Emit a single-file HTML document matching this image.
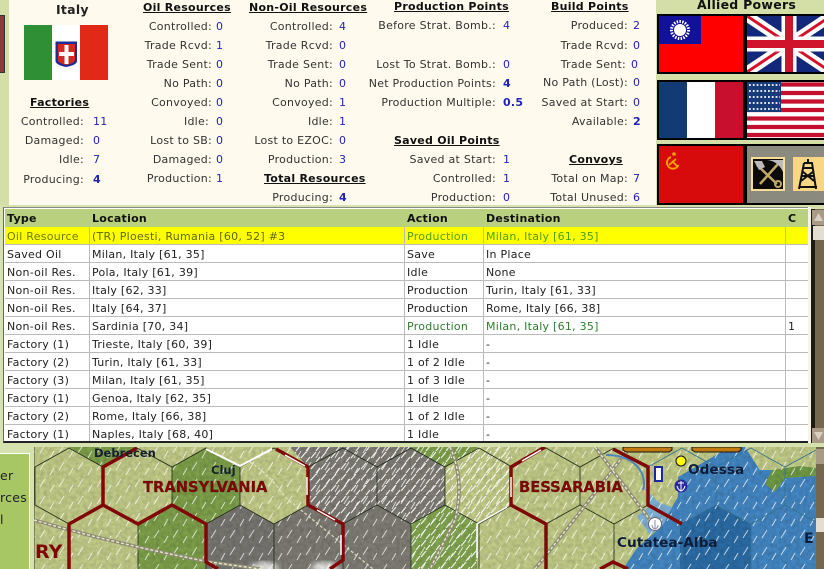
<!DOCTYPE html>
<html><head><meta charset="utf-8">
<style>
html,body{margin:0;padding:0;width:824px;height:569px;overflow:hidden;background:#d6e2ad}
body{position:relative;font-family:"DejaVu Sans","Liberation Sans",sans-serif;font-size:11px;color:#222;letter-spacing:.26px}
.a{position:absolute}
.l{position:absolute;white-space:nowrap;line-height:16px;color:#333}
.r{text-align:right;width:200px}
.v{position:absolute;white-space:nowrap;line-height:16px;color:#2222bb}
.b{font-weight:bold}
.h{position:absolute;white-space:nowrap;line-height:16px;font-weight:bold;color:#111;text-decoration:underline;font-size:11px}
.c{position:absolute;line-height:20px;white-space:nowrap;color:#222}
.g{color:#2e7d2e}
.f{position:absolute;border:2px solid #000;overflow:hidden;box-sizing:border-box}
</style></head><body>

<div class="a" style="left:0;top:0;width:9px;height:205px;background:#d3dfa7"></div>
<div class="a" style="left:0;top:15px;width:5px;height:58px;background:#8c3a34;border:1px solid #333;border-left:0;box-sizing:border-box"></div>
<div class="a" style="left:9px;top:0;width:647px;height:205px;background:#fefbee"></div>
<div class="a" style="left:656px;top:0;width:168px;height:208px;background:#d3dfa7"></div>

<div class="l b" style="left:56px;top:2px;color:#222;font-size:12.5px">Italy</div>
<svg class="a" style="left:24px;top:25px" width="84" height="55" viewBox="0 0 84 55"><rect width="28" height="55" fill="#2f8f35"/><rect x="28" width="28" height="55" fill="#fff"/><rect x="56" width="28" height="55" fill="#e02a17"/><path d="M31.500 16.500H53V36Q53 40 42 42Q32 40 31.500 36Z" fill="#1c2c9c"/><path d="M34 19H51V35Q51 38 42.500 40Q34 38 34 35Z" fill="#d22a20"/><path d="M40.500 20H44.500V27H50V31H44.500V39H40.500V31H35V27H40.500Z" fill="#fff"/></svg>

<div class="h" style="left:30px;top:95px">Factories</div>
<div class="l r" style="left:-116px;top:114px">Controlled:</div><div class="v" style="left:93px;top:114px">11</div>
<div class="l r" style="left:-116px;top:133px">Damaged:</div><div class="v" style="left:93px;top:133px">0</div>
<div class="l r" style="left:-116px;top:152px">Idle:</div><div class="v" style="left:93px;top:152px">7</div>
<div class="l r" style="left:-116px;top:172px">Producing:</div><div class="v b" style="left:93px;top:172px">4</div>

<div class="h" style="left:143px;top:0">Oil Resources</div>
<div class="l r" style="left:12px;top:19px">Controlled:</div><div class="v" style="left:216px;top:19px">0</div>
<div class="l r" style="left:12px;top:38px">Trade Rcvd:</div><div class="v" style="left:216px;top:38px">1</div>
<div class="l r" style="left:12px;top:57px">Trade Sent:</div><div class="v" style="left:216px;top:57px">0</div>
<div class="l r" style="left:12px;top:76px">No Path:</div><div class="v" style="left:216px;top:76px">0</div>
<div class="l r" style="left:12px;top:95px">Convoyed:</div><div class="v" style="left:216px;top:95px">0</div>
<div class="l r" style="left:9px;top:114px">Idle:</div><div class="v" style="left:216px;top:114px">0</div>
<div class="l r" style="left:12px;top:133px">Lost to SB:</div><div class="v" style="left:216px;top:133px">0</div>
<div class="l r" style="left:12px;top:152px">Damaged:</div><div class="v" style="left:216px;top:152px">0</div>
<div class="l r" style="left:12px;top:171px">Production:</div><div class="v" style="left:216px;top:171px">1</div>

<div class="h" style="left:249px;top:0">Non-Oil Resources</div>
<div class="l r" style="left:133px;top:19px">Controlled:</div><div class="v" style="left:339px;top:19px">4</div>
<div class="l r" style="left:133px;top:38px">Trade Rcvd:</div><div class="v" style="left:339px;top:38px">0</div>
<div class="l r" style="left:133px;top:57px">Trade Sent:</div><div class="v" style="left:339px;top:57px">0</div>
<div class="l r" style="left:133px;top:76px">No Path:</div><div class="v" style="left:339px;top:76px">0</div>
<div class="l r" style="left:133px;top:95px">Convoyed:</div><div class="v" style="left:339px;top:95px">1</div>
<div class="l r" style="left:133px;top:114px">Idle:</div><div class="v" style="left:339px;top:114px">1</div>
<div class="l r" style="left:133px;top:133px">Lost to EZOC:</div><div class="v" style="left:339px;top:133px">0</div>
<div class="l r" style="left:133px;top:152px">Production:</div><div class="v" style="left:339px;top:152px">3</div>
<div class="h" style="left:264px;top:171px">Total Resources</div>
<div class="l r" style="left:133px;top:190px">Producing:</div><div class="v b" style="left:339px;top:190px">4</div>

<div class="h" style="left:394px;top:-1px">Production Points</div>
<div class="l r" style="left:296px;top:18px">Before Strat. Bomb.:</div><div class="v" style="left:503px;top:18px">4</div>
<div class="l r" style="left:296px;top:57px">Lost To Strat. Bomb.:</div><div class="v" style="left:503px;top:57px">0</div>
<div class="l r" style="left:296px;top:76px">Net Production Points:</div><div class="v b" style="left:503px;top:76px">4</div>
<div class="l r" style="left:296px;top:95px">Production Multiple:</div><div class="v b" style="left:503px;top:95px">0.5</div>
<div class="h" style="left:394px;top:133px">Saved Oil Points</div>
<div class="l r" style="left:296px;top:152px">Saved at Start:</div><div class="v" style="left:503px;top:152px">1</div>
<div class="l r" style="left:296px;top:171px">Controlled:</div><div class="v" style="left:503px;top:171px">1</div>
<div class="l r" style="left:296px;top:190px">Production:</div><div class="v" style="left:503px;top:190px">0</div>

<div class="h" style="left:551px;top:-1px">Build Points</div>
<div class="l r" style="left:428px;top:18px">Produced:</div><div class="v" style="left:633px;top:18px">2</div>
<div class="l r" style="left:428px;top:38px">Trade Rcvd:</div><div class="v" style="left:633px;top:38px">0</div>
<div class="l r" style="left:426px;top:57px">Trade Sent:</div><div class="v" style="left:631px;top:57px">0</div>
<div class="l r" style="left:428px;top:75px">No Path (Lost):</div><div class="v" style="left:633px;top:75px">0</div>
<div class="l r" style="left:428px;top:95px">Saved at Start:</div><div class="v" style="left:633px;top:95px">0</div>
<div class="l r" style="left:428px;top:114px">Available:</div><div class="v b" style="left:633px;top:114px">2</div>
<div class="h" style="left:569px;top:152px">Convoys</div>
<div class="l r" style="left:428px;top:171px">Total on Map:</div><div class="v" style="left:633px;top:171px">7</div>
<div class="l r" style="left:428px;top:190px">Total Unused:</div><div class="v" style="left:633px;top:190px">6</div>

<div class="l b" style="left:697px;top:-3px;color:#111;font-size:12.5px">Allied Powers</div>
<svg class="f" style="left:657px;top:14px;width:88px;height:60px" viewBox="0 0 84 56"><rect width="84" height="56" fill="#f00"/><rect width="42" height="28" fill="#11119a"/><circle cx="21" cy="14" r="8.500" fill="none" stroke="#fff" stroke-width="3" stroke-dasharray="1.500 1.300"/><circle cx="21" cy="14" r="6" fill="#fff"/></svg>
<svg class="f" style="left:745px;top:14px;width:88px;height:60px" viewBox="0 0 84 56"><rect width="84" height="56" fill="#12287a"/><path d="M0 0L84 56M84 0L0 56" stroke="#fff" stroke-width="11"/><path d="M0 0L84 56M84 0L0 56" stroke="#d0142c" stroke-width="3"/><path d="M42 0V56M0 28H84" stroke="#fff" stroke-width="15"/><path d="M42 0V56M0 28H84" stroke="#d0142c" stroke-width="8"/></svg>
<svg class="f" style="left:657px;top:80px;width:88px;height:60px" viewBox="0 0 84 56"><rect width="28" height="56" fill="#123a73"/><rect x="28" width="28" height="56" fill="#fff"/><rect x="56" width="28" height="56" fill="#c8102e"/></svg>
<svg class="f" style="left:745px;top:80px;width:88px;height:60px" viewBox="0 0 84 56"><rect width="84" height="56" fill="#fff"/><path d="M0 2.500H84M0 11H84M0 19.500H84M0 28H84M0 36.500H84M0 45H84M0 53H84" stroke="#c4102e" stroke-width="4.300"/><rect width="34" height="30" fill="#163a7a"/><path d="M2 3H33M2 9H33M2 15H33M2 21H33M2 27H33" stroke="#fff" stroke-width="1.800" stroke-dasharray="1.800 2"/></svg>
<svg class="f" style="left:657px;top:144px;width:88px;height:61px" viewBox="0 0 84 57"><rect width="84" height="57" fill="#d70b0b"/><path d="M12 11A6 6 0 1 0 19.500 19M10 19L17 13M13 15L19 21" fill="none" stroke="#fca400" stroke-width="1.800"/><circle cx="15" cy="8" r="1.800" fill="#fca400"/></svg>
<div class="f" style="left:745px;top:144px;width:88px;height:61px;background:#8a8a7f"></div>
<svg class="a" style="left:751px;top:157px" width="73" height="34" viewBox="0 0 73 34"><rect width="34" height="34" fill="#f7dc97"/><rect x="2" y="2" width="30" height="30" fill="#0c0a08"/><path d="M6 8L26 27M27 7L9 27" stroke="#c0a868" stroke-width="2.500"/><circle cx="27" cy="27" r="3" fill="none" stroke="#c0a868" stroke-width="2"/><path d="M3 4H11L14 10L8 13Z" fill="#bbb"/><path d="M16 3Q27 4 32 15V3Z" fill="#bbb"/><rect x="42" width="31" height="34" fill="#f9d684"/><path d="M57 2V6M53 6H61L65 32M53 6L48 32M48 30H66M50 19H63M52 11H62M51 14L63 24M63 14L50 24" fill="none" stroke="#111" stroke-width="2"/></svg>

<!-- table -->
<div class="a" style="left:3px;top:207px;width:805px;height:236px;background:#fff;border-left:1px solid #666;border-top:1px solid #888;border-bottom:2px solid #222;box-sizing:border-box"></div>
<div class="a" style="left:808px;top:207px;width:3px;height:236px;background:#f6f4e4"></div>
<div class="a" style="left:5px;top:209px;width:803px;height:18px;background:#b9d17f"></div>
<div class="a" style="left:5px;top:227px;width:803px;height:18px;background:#ff0"></div>
<div class="c b" style="left:7px;top:209px;color:#111">Type</div><div class="c b" style="left:92px;top:209px;color:#111">Location</div><div class="c b" style="left:407px;top:209px;color:#111">Action</div><div class="c b" style="left:486px;top:209px;color:#111">Destination</div><div class="c b" style="left:788px;top:209px;color:#111">C</div>

<div class="a" style="left:5px;top:244px;width:803px;height:1px;background:#bbb"></div>
<div class="a" style="left:5px;top:262px;width:803px;height:1px;background:#bbb"></div>
<div class="a" style="left:5px;top:280px;width:803px;height:1px;background:#bbb"></div>
<div class="a" style="left:5px;top:298px;width:803px;height:1px;background:#bbb"></div>
<div class="a" style="left:5px;top:316px;width:803px;height:1px;background:#bbb"></div>
<div class="a" style="left:5px;top:334px;width:803px;height:1px;background:#bbb"></div>
<div class="a" style="left:5px;top:352px;width:803px;height:1px;background:#bbb"></div>
<div class="a" style="left:5px;top:370px;width:803px;height:1px;background:#bbb"></div>
<div class="a" style="left:5px;top:388px;width:803px;height:1px;background:#bbb"></div>
<div class="a" style="left:5px;top:406px;width:803px;height:1px;background:#bbb"></div>
<div class="a" style="left:5px;top:424px;width:803px;height:1px;background:#bbb"></div>
<div class="a" style="left:89px;top:227px;width:1px;height:214px;background:#bbb"></div>
<div class="a" style="left:404px;top:227px;width:1px;height:214px;background:#bbb"></div>
<div class="a" style="left:483px;top:227px;width:1px;height:214px;background:#bbb"></div>
<div class="a" style="left:785px;top:227px;width:1px;height:214px;background:#bbb"></div>

<div class="c" style="left:7px;top:227px;color:#6a7d00">Oil Resource</div><div class="c" style="left:92px;top:227px;color:#5d6a00">(TR) Ploesti, Rumania [60, 52] #3</div><div class="c" style="left:407px;top:227px;color:#4fa010">Production</div><div class="c" style="left:486px;top:227px;color:#4fa010">Milan, Italy [61, 35]</div>
<div class="c" style="left:7px;top:245px">Saved Oil</div><div class="c" style="left:92px;top:245px">Milan, Italy [61, 35]</div><div class="c" style="left:407px;top:245px">Save</div><div class="c" style="left:486px;top:245px">In Place</div>
<div class="c" style="left:7px;top:263px">Non-oil Res.</div><div class="c" style="left:92px;top:263px">Pola, Italy [61, 39]</div><div class="c" style="left:407px;top:263px">Idle</div><div class="c" style="left:486px;top:263px">None</div>
<div class="c" style="left:7px;top:281px">Non-oil Res.</div><div class="c" style="left:92px;top:281px">Italy [62, 33]</div><div class="c" style="left:407px;top:281px">Production</div><div class="c" style="left:486px;top:281px">Turin, Italy [61, 33]</div>
<div class="c" style="left:7px;top:299px">Non-oil Res.</div><div class="c" style="left:92px;top:299px">Italy [64, 37]</div><div class="c" style="left:407px;top:299px">Production</div><div class="c" style="left:486px;top:299px">Rome, Italy [66, 38]</div>
<div class="c" style="left:7px;top:317px">Non-oil Res.</div><div class="c" style="left:92px;top:317px">Sardinia [70, 34]</div><div class="c g" style="left:407px;top:317px">Production</div><div class="c g" style="left:486px;top:317px">Milan, Italy [61, 35]</div><div class="c" style="left:788px;top:317px">1</div>
<div class="c" style="left:7px;top:335px">Factory (1)</div><div class="c" style="left:92px;top:335px">Trieste, Italy [60, 39]</div><div class="c" style="left:407px;top:335px">1 Idle</div><div class="c" style="left:486px;top:335px">-</div>
<div class="c" style="left:7px;top:353px">Factory (2)</div><div class="c" style="left:92px;top:353px">Turin, Italy [61, 33]</div><div class="c" style="left:407px;top:353px">1 of 2 Idle</div><div class="c" style="left:486px;top:353px">-</div>
<div class="c" style="left:7px;top:371px">Factory (3)</div><div class="c" style="left:92px;top:371px">Milan, Italy [61, 35]</div><div class="c" style="left:407px;top:371px">1 of 3 Idle</div><div class="c" style="left:486px;top:371px">-</div>
<div class="c" style="left:7px;top:389px">Factory (1)</div><div class="c" style="left:92px;top:389px">Genoa, Italy [62, 35]</div><div class="c" style="left:407px;top:389px">1 Idle</div><div class="c" style="left:486px;top:389px">-</div>
<div class="c" style="left:7px;top:407px">Factory (2)</div><div class="c" style="left:92px;top:407px">Rome, Italy [66, 38]</div><div class="c" style="left:407px;top:407px">1 of 2 Idle</div><div class="c" style="left:486px;top:407px">-</div>
<div class="c" style="left:7px;top:425px">Factory (1)</div><div class="c" style="left:92px;top:425px">Naples, Italy [68, 40]</div><div class="c" style="left:407px;top:425px">1 Idle</div><div class="c" style="left:486px;top:425px">-</div>

<!-- scrollbar -->
<svg class="a" style="left:811px;top:209px" width="13" height="234" viewBox="0 0 13 234"><rect width="13" height="234" fill="#1f1a12"/><rect x="4" width="9" height="234" fill="#75664e"/><rect x="1" y="1" width="12" height="15" fill="#a89a84"/><path d="M3 12L7.500 4L12 12Z" fill="#d8d0c0"/><rect x="2" y="17" width="11" height="14" fill="#e3ddd2"/><rect x="1" y="219" width="12" height="15" fill="#a89a84"/><path d="M3 223L7.500 231L12 223Z" fill="#d8d0c0"/></svg>

<!-- left lower panel -->
<div class="a" style="left:0;top:453px;width:30px;height:116px;background:#a7c765;border-top:1px solid #fff;border-right:1px solid #fff;box-sizing:border-box"></div>
<div class="l" style="left:0;top:468px;color:#222;font-size:12.5px">er</div>
<div class="l" style="left:0;top:490px;color:#222;font-size:12.5px">rces</div>
<div class="l" style="left:0;top:512px;color:#222;font-size:12.5px">l</div>

<!-- map -->
<svg class="a" style="left:34px;top:447px;letter-spacing:0" width="790" height="122" viewBox="34 447 790 122" font-family="'DejaVu Sans',sans-serif" font-weight="bold">
<defs>
<pattern id="rain" width="19" height="17" patternUnits="userSpaceOnUse"><path d="M2 11L7 3M12 16L16 9" stroke="#fff" stroke-width="1" opacity=".7"/></pattern>
<pattern id="dense" width="10" height="11" patternUnits="userSpaceOnUse"><path d="M1 7L6 1M6 11L10 6" stroke="#fff" stroke-width="1.100" opacity=".9"/></pattern>
<filter id="noise" x="0" y="0" width="100%" height="100%"><feTurbulence type="fractalNoise" baseFrequency=".25" numOctaves="2" seed="4"/><feColorMatrix values="0 0 0 0 0 0 0 0 0 0 0 0 0 0 0 0 0 0 .9 -.25"/></filter>
<filter id="bl"><feGaussianBlur stdDeviation="3"/></filter>
</defs>
<rect x="34" y="447" width="790" height="122" fill="#c2cb88"/>
<!-- terrain -->
<polygon points="69,447 137,447 103,467" fill="#7d9f4a"/>
<polygon points="172,467 206,448 240,467 240,505 206,524 172,505" fill="#7d9f4a"/>
<polygon points="290,447 411,447 445,467 445,505 411,524 377,505 343,524 308,505 308,467" fill="#7e7c74"/>
<polygon points="411,447 479,447 445,467" fill="#7d9f4a"/>
<polygon points="138,524 172,505 206,524 206,569 138,569" fill="#7d9f4a"/>
<polygon points="206,524 240,505 274,524 274,569 206,569" fill="#777570"/>
<polygon points="274,524 308,505 343,524 343,569 274,569" fill="#7c7a72"/>
<polygon points="343,524 377,505 411,524 411,569 343,569" fill="#7e7c74"/>
<polygon points="411,524 445,505 477,524 477,569 411,569" fill="#82a450"/>
<ellipse cx="265" cy="568" rx="14" ry="6" fill="#e8e8e4" filter="url(#bl)"/>
<ellipse cx="325" cy="568" rx="14" ry="6" fill="#e8e8e4" filter="url(#bl)"/>
<!-- sea -->
<path d="M816 470V569H623L637 548L663 525L672 507L678 497L678 477L690 470L730 447L745 447L760 470Z" fill="#4386c2"/>
<path d="M643 485Q648 495 650 506L637 516L650 535L663 525L672 507L660 503Q650 495 643 485Z" fill="#7fb2d8"/>
<path d="M680 524L716 505L751 524V569H680Z" fill="#2b6ca6"/>
<path d="M745 447H816V472L775 468L760 470Z" fill="#c2cb88"/>
<path d="M765 484L772 470L800 466L816 468V476L785 478L775 492Z" fill="#6f9a45"/>
<rect x="34" y="447" width="782" height="122" filter="url(#noise)" opacity=".28"/>
<rect x="34" y="447" width="782" height="122" fill="url(#rain)"/>
<polygon points="290,447 411,447 445,467 445,505 411,524 377,505 343,524 308,505 308,467" fill="url(#dense)"/>
<polygon points="411,447 512,447 512,505 479,524 445,505 445,467" fill="url(#dense)"/>
<polygon points="411,524 445,505 477,524 477,569 411,569" fill="url(#dense)"/>
<!-- hex grid -->
<g fill="none" stroke="#1e2b14" stroke-width=".8">
<path d="M35 467L69 448L103 467L137 448L172 467L206 448L240 467L274 448L308 467L343 448L377 467L411 448L445 467L479 448L512 467L546 448L580 467L614 448L648 467"/>
<path d="M35 505L69 524L103 505L137 524L172 505L206 524L240 505L274 524L308 505L343 524L377 505L411 524L445 505L479 524L512 505L546 524L580 505L614 524L648 505"/>
<path d="M35 467V505M103 467V505M172 467V505M240 467V505M308 467V505M377 467V505M445 467V505M512 467V505M580 467V505M69 524V569M138 524V569M206 524V569M274 524V569M343 524V569M411 524V569M479 524V569M546 524V569M614 524V569"/>
</g>
<g fill="none" stroke="#35708f" stroke-width=".8">
<path d="M648 467L682 448L716 467L751 448L785 467L816 450M648 505L682 524L716 505L751 524L785 505L816 522M716 467V505M785 467V505M682 524V569M751 524V569"/>
</g>
<path d="M34 447V569" stroke="#444" stroke-width="1"/>
<!-- rail/road -->
<g fill="none" stroke="#8d8b74" stroke-width="3.500"><path d="M34 520Q120 545 210 562L260 569"/><path d="M450 447Q465 480 455 520L430 569"/><path d="M595 447L650 520M535 569Q590 500 630 447"/></g>
<g fill="none" stroke="#eae8cc" stroke-width="1.400" stroke-dasharray="3 2"><path d="M34 520Q120 545 210 562L260 569"/><path d="M450 447Q465 480 455 520L430 569"/><path d="M595 447L650 520M535 569Q590 500 630 447"/><path d="M250 462Q270 475 285 497L373 569" opacity=".8"/></g>
<!-- river -->
<path d="M606 455Q630 455 640 470Q646 480 643 490" fill="none" stroke="#4f86b8" stroke-width="2"/>
<!-- white borders -->
<path d="M206 449L240 466L272 449" fill="none" stroke="#fff" stroke-width="2"/>
<path d="M507 507L477 524V558" fill="none" stroke="#fff" stroke-width="1.500"/>
<!-- red borders -->
<g fill="none" stroke="#7f0808" stroke-width="3.500">
<path d="M137 448L103 467V505L69 524V569"/>
<path d="M103 505L138 524L172 505L206 524V562L218 569"/>
<path d="M276 449L308 467V505L343 524V560L330 569"/>
<path d="M545 447L511 467V505L546 524V569"/>
<path d="M613 449L648 467V505L682 524"/>
<path d="M600 569L613 562L628 569"/>
</g>
<path d="M285 455L305 466M307 477V495M317 510L335 520M341 535V555M511 477V497M522 461L541 450" stroke="#fff" stroke-width="1.500"/>
<path d="M623 447H672V450L669 452H626L623 450Z" fill="#c17a10" stroke="#111"/>
<path d="M692 447H741V450L738 452H695L692 450Z" fill="#c17a10" stroke="#111"/>
<!-- markers -->
<circle cx="681" cy="461" r="5" fill="#ff0" stroke="#111"/>
<rect x="655" y="467" width="7" height="14" fill="#fff" stroke="#1a2a9a" stroke-width="2"/>
<circle cx="681" cy="486" r="6.500" fill="#2a2a9a"/><path d="M681 481V491M677 486Q678 490 681 491Q684 490 685 486M678 483H684" stroke="#fff" fill="none"/>
<circle cx="655" cy="524" r="6.500" fill="#fff" stroke="#667"/><path d="M655 520V529M652 525Q652 528 655 529Q658 528 658 525" stroke="#88a" fill="none"/>
<!-- labels -->
<text x="94" y="457" font-size="11.500" fill="#15202a">Debrecen</text>
<text x="211" y="474" font-size="11.500" fill="#15202a">Cluj</text>
<text x="143" y="492" font-size="14.700" fill="#7f0808" stroke="#3b0505" stroke-width=".2">TRANSYLVANIA</text>
<text x="519" y="492" font-size="14.700" fill="#7f0808" stroke="#3b0505" stroke-width=".2">BESSARABIA</text>
<text x="35" y="558" font-size="19" fill="#7f0808">RY</text>
<text x="688" y="474" font-size="13.700" fill="#0e1e3a">Odessa</text>
<text x="617" y="547" font-size="13.700" fill="#0e1e3a">Cutatea-Alba</text>
<text x="804" y="543" font-size="14" fill="#0e1e3a">E</text>
<rect x="816" y="447" width="8" height="122" fill="#75664e"/>
<rect x="816" y="449" width="8" height="15" fill="#a89a84"/>
<rect x="816" y="518" width="8" height="14" fill="#e3ddd2"/>
</svg>
</body></html>
